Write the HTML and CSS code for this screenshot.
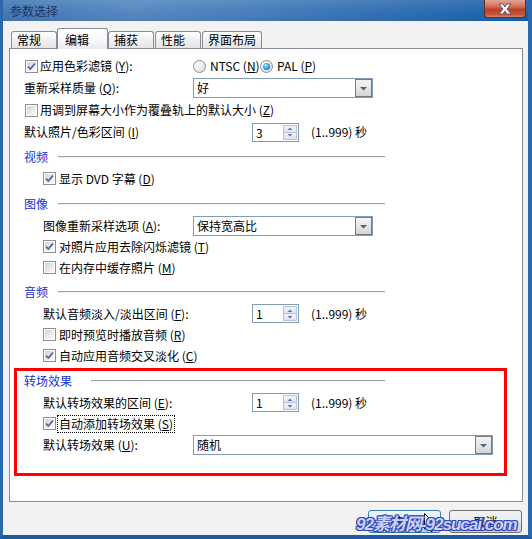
FILE: index.html
```html
<!DOCTYPE html>
<html lang="zh-CN">
<head>
<meta charset="utf-8">
<title>参数选择</title>
<link rel="stylesheet" href="styles.css">
</head>
<body>
<div class="window">
  <div class="titlebar">
    <span class="title">参数选择</span>
    <div class="close">
      <svg width="20" height="12" viewBox="0 0 20 12"><path d="M4 1 H8 L10 4 L12 1 H16 L12 6 L16 11 H12 L10 8 L8 11 H4 L8 6 Z" fill="#ffffff" stroke="#5a5a6a" stroke-width="1" stroke-linejoin="round"/></svg>
    </div>
  </div>
  <div class="body">
    <div class="tabs">
      <div class="tab">常规</div>
      <div class="tab active">编辑</div>
      <div class="tab">捕获</div>
      <div class="tab">性能</div>
      <div class="tab">界面布局</div>
    </div>
    <div class="panel">
      <div class="row h22">
        <div class="fld w169"><span class="chk on g1"><svg width="11" height="11" viewBox="0 0 11 11"><path d="M2 5.5 L4.3 8 L9 2.5" fill="none" stroke="#4b64a0" stroke-width="1.8"/></svg></span><span>应用色彩滤镜 (<u>Y</u>):</span></div>
        <div class="rgrp ntsc"><span class="radio"></span><span>NTSC (<u>N</u>)</span></div>
        <div class="rgrp"><span class="radio on"><span class="dot"></span></span><span>PAL (<u>P</u>)</span></div>
      </div>
      <div class="row h22">
        <div class="fld w169">重新采样质量 (<u>Q</u>):</div>
        <div class="select s180"><span class="val">好</span><span class="arrow"><svg width="15" height="16" viewBox="0 0 15 16"><path d="M4 7 H11 L7.5 10.5 Z" fill="#4d6185"/></svg></span></div>
      </div>
      <div class="row h22">
        <div class="fld"><span class="chk g1"></span><span>用调到屏幕大小作为覆叠轨上的默认大小 (<u>Z</u>)</span></div>
      </div>
      <div class="row h22">
        <div class="fld w228">默认照片/色彩区间 (<u>I</u>)</div>
        <div class="spin"><span class="v">3</span><span class="btns"><span class="up"><svg width="13" height="7" viewBox="0 0 13 7"><path d="M4 5 H9 L6.5 2.5 Z" fill="#5b6fb0"/></svg></span><span class="dn"><svg width="13" height="7" viewBox="0 0 13 7"><path d="M4 2 H9 L6.5 4.5 Z" fill="#5b6fb0"/></svg></span></span></div>
        <span class="range">(1..999) 秒</span>
      </div>

      <div class="hdr"><span class="htxt">视频</span><span class="line"></span></div>
      <div class="row">
        <div class="fld ind"><span class="chk on"><svg width="11" height="11" viewBox="0 0 11 11"><path d="M2 5.5 L4.3 8 L9 2.5" fill="none" stroke="#4b64a0" stroke-width="1.8"/></svg></span><span>显示 DVD 字幕 (<u>D</u>)</span></div>
      </div>

      <div class="hdr gap4"><span class="htxt">图像</span><span class="line"></span></div>
      <div class="row">
        <div class="fld w169 ind">图像重新采样选项 (<u>A</u>):</div>
        <div class="select s180"><span class="val">保持宽高比</span><span class="arrow"><svg width="15" height="16" viewBox="0 0 15 16"><path d="M4 7 H11 L7.5 10.5 Z" fill="#4d6185"/></svg></span></div>
      </div>
      <div class="row">
        <div class="fld ind"><span class="chk on"><svg width="11" height="11" viewBox="0 0 11 11"><path d="M2 5.5 L4.3 8 L9 2.5" fill="none" stroke="#4b64a0" stroke-width="1.8"/></svg></span><span>对照片应用去除闪烁滤镜 (<u>T</u>)</span></div>
      </div>
      <div class="row">
        <div class="fld ind"><span class="chk"></span><span>在内存中缓存照片 (<u>M</u>)</span></div>
      </div>

      <div class="hdr"><span class="htxt">音频</span><span class="line"></span></div>
      <div class="row">
        <div class="fld w228 ind">默认音频淡入/淡出区间 (<u>F</u>):</div>
        <div class="spin"><span class="v">1</span><span class="btns"><span class="up"><svg width="13" height="7" viewBox="0 0 13 7"><path d="M4 5 H9 L6.5 2.5 Z" fill="#5b6fb0"/></svg></span><span class="dn"><svg width="13" height="7" viewBox="0 0 13 7"><path d="M4 2 H9 L6.5 4.5 Z" fill="#5b6fb0"/></svg></span></span></div>
        <span class="range">(1..999) 秒</span>
      </div>
      <div class="row">
        <div class="fld ind"><span class="chk"></span><span>即时预览时播放音频 (<u>R</u>)</span></div>
      </div>
      <div class="row">
        <div class="fld ind"><span class="chk on"><svg width="11" height="11" viewBox="0 0 11 11"><path d="M2 5.5 L4.3 8 L9 2.5" fill="none" stroke="#4b64a0" stroke-width="1.8"/></svg></span><span>自动应用音频交叉淡化 (<u>C</u>)</span></div>
      </div>

      <div class="hdr gap4"><span class="htxt">转场效果</span><span class="line wide"></span></div>
      <div class="row">
        <div class="fld w228 ind">默认转场效果的区间 (<u>E</u>):</div>
        <div class="spin"><span class="v">1</span><span class="btns"><span class="up"><svg width="13" height="7" viewBox="0 0 13 7"><path d="M4 5 H9 L6.5 2.5 Z" fill="#5b6fb0"/></svg></span><span class="dn"><svg width="13" height="7" viewBox="0 0 13 7"><path d="M4 2 H9 L6.5 4.5 Z" fill="#5b6fb0"/></svg></span></span></div>
        <span class="range">(1..999) 秒</span>
      </div>
      <div class="row">
        <div class="fld ind"><span class="chk on"><svg width="11" height="11" viewBox="0 0 11 11"><path d="M2 5.5 L4.3 8 L9 2.5" fill="none" stroke="#4b64a0" stroke-width="1.8"/></svg></span><span class="focus">自动添加转场效果 (<u>S</u>)</span></div>
      </div>
      <div class="row">
        <div class="fld w169 ind">默认转场效果 (<u>U</u>):</div>
        <div class="select s300"><span class="val">随机</span><span class="arrow"><svg width="15" height="16" viewBox="0 0 15 16"><path d="M4 7 H11 L7.5 10.5 Z" fill="#4d6185"/></svg></span></div>
      </div>
    </div>
    <div class="buttons">
      <div class="btn default">确定</div>
      <div class="btn">取消</div>
    </div>
  </div>
  <div class="redbox"></div>
  <svg class="cursor" width="13" height="20" viewBox="0 0 13 20"><path d="M0.5 0.5 L0.5 16 L4.3 12.3 L7 18.5 L9.2 17.5 L6.6 11.5 L11.5 11.5 Z" fill="#ffffff" stroke="#000000" stroke-width="1"/></svg>
  <div class="watermark">92素材网-92sucai.com</div>
</div>
</body>
</html>
```
FILE: styles.css
```css
html, body {
  margin: 0;
  padding: 0;
  background: #ffffff;
}
body {
  font-family: "Noto Sans CJK SC", "Noto Sans", sans-serif;
  font-size: 12px;
  line-height: 14px;
  color: #000;
}
u { text-decoration: underline; text-underline-offset: 1px; }

.window {
  position: relative;
  width: 532px;
  height: 539px;
  box-sizing: border-box;
  border-left: 3px solid #2a69ad;
  border-right: 4px solid #2a69ad;
  border-bottom: 4px solid #1d5a9f;
  background: #f2f2f2;
  overflow: hidden;
}

.titlebar {
  height: 21px;
  display: flex;
  align-items: flex-start;
  background:
    linear-gradient(180deg, rgba(255,255,255,0.10) 0%, rgba(255,255,255,0) 60%, rgba(0,0,0,0.06) 100%),
    linear-gradient(90deg, #4479b6 0%, #5688c0 25%, #4a80bc 45%, #3b76b6 62%, #2e6db2 78%, #1a60aa 100%);
}
.title {
  flex: 1;
  padding-left: 7px;
  line-height: 21px;
  color: #1c3566;
}
.close {
  width: 42px;
  height: 18px;
  box-sizing: border-box;
  margin-right: 2px;
  border: 1px solid #6a2a22;
  border-top: none;
  border-radius: 0 0 4px 4px;
  background: linear-gradient(180deg, #e3a595 0%, #d36b55 40%, #bd3e27 55%, #c4553b 85%, #d8826a 100%);
  display: flex;
  align-items: center;
  justify-content: center;
}

.tabs {
  display: flex;
  align-items: flex-end;
  height: 20px;
  margin-top: 7px;
  padding-left: 8px;
}
.tab {
  height: 17px;
  min-width: 46px;
  box-sizing: border-box;
  padding: 0 5px;
  margin-right: 1px;
  border: 1px solid #898c95;
  border-bottom: none;
  border-radius: 3px 3px 0 0;
  background: linear-gradient(180deg, #ffffff 0%, #f0f0f0 50%, #e4e4e4 100%);
  line-height: 16px;
}
.tab.active {
  position: relative;
  z-index: 1;
  height: 21px;
  min-width: 51px;
  padding: 3px 7px 0;
  margin: 0 0 -1px -1px;
  background: linear-gradient(180deg, #ffffff 0%, #f6f7fa 60%, #e9ebf3 100%);
}

.panel {
  margin-left: 6px;
  width: 514px;
  height: 454px;
  box-sizing: border-box;
  border: 1px solid #898c95;
  background: #ffffff;
  padding: 6px 0 0 14px;
}

.row {
  display: flex;
  align-items: center;
  height: 21px;
}
.row.h22 { height: 22px; }
.fld {
  display: flex;
  align-items: center;
  white-space: nowrap;
  box-sizing: border-box;
  flex: none;
}
.w169 { width: 169px; }
.w228 { width: 228px; }
.ind { padding-left: 19px; }

.chk {
  width: 13px;
  height: 13px;
  box-sizing: border-box;
  flex: none;
  margin-right: 3px;
  border: 1px solid #8f8f8f;
  background: #ffffff;
  padding: 1px;
  position: relative;
}
.chk::before {
  content: "";
  position: absolute;
  inset: 1px;
  background: linear-gradient(135deg, #d3d3d3 0%, #ececec 60%, #fbfbfb 100%);
}
.chk svg {
  position: absolute;
  left: 0;
  top: 0;
}
.chk.g1 { margin-left: 1px; margin-right: 2px; }

.rgrp {
  display: flex;
  align-items: center;
  white-space: nowrap;
  flex: none;
}
.rgrp.ntsc { width: 67px; }
.radio {
  width: 13px;
  height: 13px;
  box-sizing: border-box;
  border-radius: 50%;
  border: 1px solid #8f8f8f;
  background: radial-gradient(circle at 35% 35%, #ffffff 0%, #e6e6e6 60%, #cfcfcf 100%);
  margin-right: 4px;
  display: flex;
  align-items: center;
  justify-content: center;
  flex: none;
}
.radio .dot {
  width: 7px;
  height: 7px;
  border-radius: 50%;
  background: radial-gradient(circle at 40% 35%, #bfeeff 0%, #3aa0e8 45%, #0d5fb0 100%);
}

.select {
  height: 20px;
  box-sizing: border-box;
  border: 1px solid #7f9db9;
  background: #ffffff;
  display: flex;
  align-items: center;
  flex: none;
}
.s180 { width: 180px; }
.s300 { width: 300px; }
.select .val {
  flex: 1;
  padding-left: 3px;
}
.select .arrow {
  width: 17px;
  height: 18px;
  box-sizing: border-box;
  border: 1px solid #7a7a7a;
  background: linear-gradient(180deg, #f4f4f4 0%, #e6e6e6 50%, #d4d4d4 100%);
  display: flex;
  align-items: center;
  justify-content: center;
}

.spin {
  width: 47px;
  height: 19px;
  box-sizing: border-box;
  border: 1px solid #7f9db9;
  background: #ffffff;
  display: flex;
  flex: none;
}
.spin .v {
  flex: 1;
  padding-left: 3px;
  line-height: 17px;
}
.spin .btns {
  width: 15px;
  display: flex;
  flex-direction: column;
  padding: 1px 1px 1px 0;
  box-sizing: border-box;
}
.spin .up, .spin .dn {
  flex: 1;
  box-sizing: border-box;
  border: 1px solid #b9c3d6;
  background: linear-gradient(180deg, #f2f4f9 0%, #dde3ef 100%);
  display: flex;
  align-items: center;
  justify-content: center;
  overflow: hidden;
}
.spin .dn { border-top: none; }
.range {
  margin-left: 12px;
  white-space: nowrap;
}

.hdr {
  display: flex;
  align-items: center;
  height: 22px;
  width: 361px;
  margin-top: 3px;
}
.hdr.gap4 { margin-top: 4px; }
.htxt {
  color: #1533d6;
  white-space: nowrap;
}
.line {
  flex: 1;
  margin-left: 10px;
  height: 0;
  border-top: 1px solid #a0a0a0;
  border-bottom: 1px solid #f0f0f0;
}
.line.wide { margin-left: 19px; }

.focus {
  margin-left: -2px;
  padding: 1px;
  border: 1px dotted #000;
}

.buttons {
  display: flex;
  justify-content: flex-end;
  gap: 8px;
  margin-top: 8px;
  padding-right: 6px;
}
.btn {
  width: 73px;
  height: 23px;
  box-sizing: border-box;
  border: 1px solid #707070;
  border-radius: 3px;
  background: linear-gradient(180deg, #f2f2f2 0%, #ebebeb 48%, #dddddd 52%, #cfcfcf 100%);
  display: flex;
  align-items: center;
  justify-content: center;
}
.btn.default {
  border-color: #3c7fb1;
  background: linear-gradient(180deg, #eaf6fd 0%, #d9f0fc 48%, #bee6fd 52%, #a7d9f5 100%);
}

.redbox {
  position: absolute;
  left: 11px;
  top: 368px;
  width: 493px;
  height: 108px;
  box-sizing: border-box;
  border: 3px solid #ff0000;
  pointer-events: none;
}

.cursor {
  position: absolute;
  left: 421px;
  top: 513px;
}

.watermark {
  position: absolute;
  left: 353px;
  top: 514px;
  font-family: "Liberation Sans", "Noto Sans CJK SC", sans-serif;
  font-style: italic;
  font-weight: bold;
  font-size: 17px;
  line-height: 22px;
  letter-spacing: -1px;
  color: #c9d1f6;
  white-space: nowrap;
  text-shadow:
    1px 0 0 #3348b8, -1px 0 0 #3348b8, 0 1px 0 #3348b8, 0 -1px 0 #3348b8,
    1px 1px 0 #3348b8, -1px -1px 0 #3348b8, 1px -1px 0 #3348b8, -1px 1px 0 #3348b8;
}
```
